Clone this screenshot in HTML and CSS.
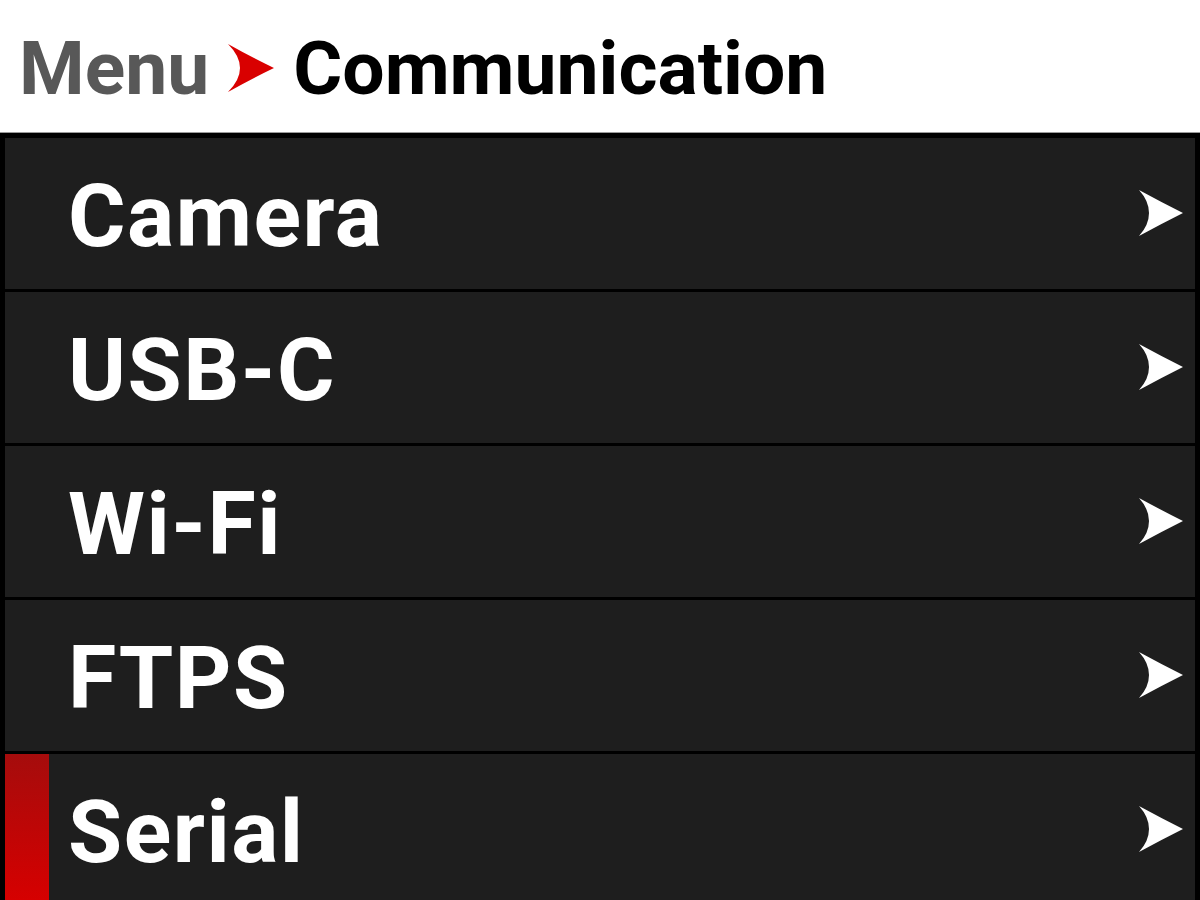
FILE: index.html
```html
<!DOCTYPE html>
<html>
<head>
<meta charset="utf-8">
<link rel="stylesheet" href="styles.css">
</head>
<body>
<div class="screen">
  <header class="crumbs">
    <span class="crumb-parent">Menu</span>
    <svg class="crumb-sep" viewBox="0 0 48 50" width="48" height="50"><path d="M1 1 Q24 14 47 25 Q24 36 1 49 Q13 37 13 25 Q13 13 1 1 Z" fill="#d90000"/></svg>
    <span class="crumb-current">Communication</span>
  </header>
  <main class="list">
    <div class="row"><span class="marker"></span><span class="label">Camera</span><svg class="chev" viewBox="0 0 46 48" width="46" height="48"><path d="M1 1 Q23 13 45 24 Q23 35 1 47 Q11 36 11 24 Q11 12 1 1 Z" fill="#fff"/></svg></div>
    <div class="row"><span class="marker"></span><span class="label">USB-C</span><svg class="chev" viewBox="0 0 46 48" width="46" height="48"><path d="M1 1 Q23 13 45 24 Q23 35 1 47 Q11 36 11 24 Q11 12 1 1 Z" fill="#fff"/></svg></div>
    <div class="row"><span class="marker"></span><span class="label">Wi-Fi</span><svg class="chev" viewBox="0 0 46 48" width="46" height="48"><path d="M1 1 Q23 13 45 24 Q23 35 1 47 Q11 36 11 24 Q11 12 1 1 Z" fill="#fff"/></svg></div>
    <div class="row"><span class="marker"></span><span class="label">FTPS</span><svg class="chev" viewBox="0 0 46 48" width="46" height="48"><path d="M1 1 Q23 13 45 24 Q23 35 1 47 Q11 36 11 24 Q11 12 1 1 Z" fill="#fff"/></svg></div>
    <div class="row selected"><span class="marker"></span><span class="label">Serial</span><svg class="chev" viewBox="0 0 46 48" width="46" height="48"><path d="M1 1 Q23 13 45 24 Q23 35 1 47 Q11 36 11 24 Q11 12 1 1 Z" fill="#fff"/></svg></div>
  </main>
</div>
</body>
</html>
```
FILE: styles.css
```css
html, body {
  margin: 0;
  padding: 0;
  background: #000;
}
.screen {
  width: 1200px;
  height: 900px;
  overflow: hidden;
  display: flex;
  flex-direction: column;
  font-family: Roboto, "Liberation Sans", sans-serif;
  font-weight: 700;
}
.crumbs {
  height: 133px;
  flex: none;
  background: #fff;
  border-bottom: 1px solid #9a9a9a;
  box-sizing: border-box;
  display: flex;
  align-items: center;
  padding-left: 19px;
  padding-top: 4px;
  font-size: 75px;
  letter-spacing: 0;
}
.crumb-parent {
  color: #585858;
}
.crumb-sep {
  margin: 0 18px 0 18px;
  display: block;
}
.crumb-current {
  color: #000;
}
.list {
  flex: 1;
  background: #000;
  padding: 5px 5px 0 5px;
  display: flex;
  flex-direction: column;
  gap: 3px;
}
.row {
  flex: none;
  height: 151px;
  background: #1e1e1e;
  display: grid;
  grid-template-columns: 44px 1fr auto;
  align-items: center;
  padding-right: 11px;
}
.marker {
  align-self: stretch;
  margin-bottom: 5px;
}
.row.selected .marker {
  background: linear-gradient(#a50c0c, #d60000);
}
.label {
  color: #fff;
  font-size: 88px;
  padding-left: 19px;
  padding-top: 4px;
  letter-spacing: 1.5px;
}
.chev {
  display: block;
  margin-top: -2px;
}
```
